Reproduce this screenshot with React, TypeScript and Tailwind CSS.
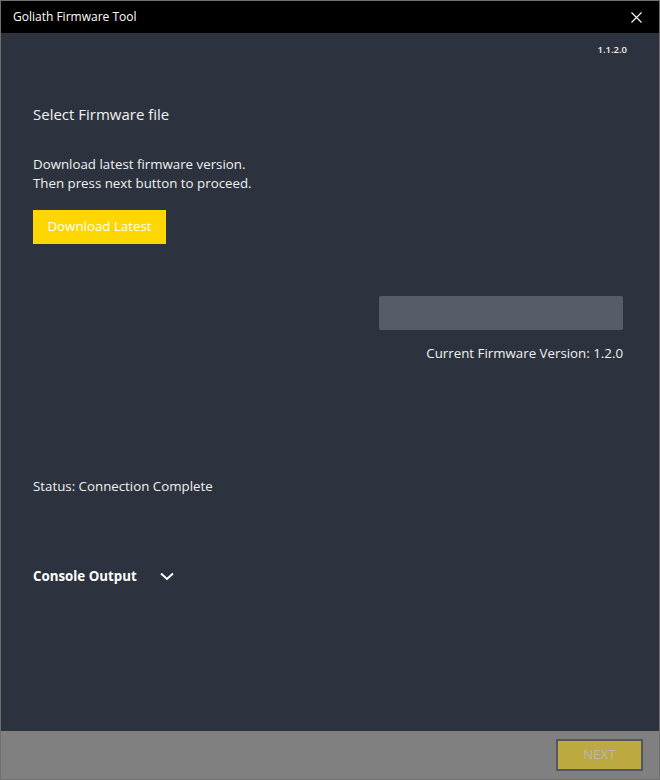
import React from 'react';

const font = { fontFamily: '"Open Sans", "Noto Sans", sans-serif' };

const App: React.FC = () => {
    return (
        <div
            className="w-[660px] h-[780px] flex flex-col border border-[#6f6f6f] bg-[#2d333e] text-white overflow-hidden"
            style={font}
        >
            {/* Title bar */}
            <div className="h-[32px] shrink-0 bg-black flex items-center justify-between pl-[12px] pr-[17px]">
                <span className="text-[12px] text-white">Goliath Firmware Tool</span>
                <svg width="11" height="11" viewBox="0 0 11 11" className="text-white">
                    <path d="M0.5 0.5L10.5 10.5M10.5 0.5L0.5 10.5" stroke="currentColor" strokeWidth="1.1" />
                </svg>
            </div>

            {/* Main content */}
            <div className="flex-1 flex flex-col pl-[32px] pr-[36px]">
                <div className="flex justify-end pt-[10px]">
                    <span className="text-[9.5px] font-semibold text-[#f0f0f0] mr-[-4px]">1.1.2.0</span>
                </div>

                <h1 className="mt-[47px] text-[15px] leading-[20px] text-[#f2f2f2]">Select Firmware file</h1>

                <p className="mt-[31px] text-[13.3px] leading-[19px] text-[#f0f0f0]">
                    Download latest firmware version.
                    <br />
                    Then press next button to proceed.
                </p>

                <button className="mt-[17px] w-[133px] h-[34px] bg-[#ffd700] text-white text-[13.3px] flex items-center justify-center">
                    Download Latest
                </button>

                <div className="flex flex-col items-end mt-[52px]">
                    <div className="w-[244px] h-[34px] rounded-[2px] bg-[#565d68]" />
                    <span className="mt-[14px] text-[13.3px] leading-[19px] text-[#f0f0f0]">
                        Current Firmware Version: 1.2.0
                    </span>
                </div>

                <span className="mt-[114px] text-[13.3px] leading-[19px] text-[#f0f0f0]">Status: Connection Complete</span>

                <div className="mt-[71px] flex items-center gap-[23px]">
                    <span className="text-[13.3px] font-bold leading-[19px]">Console Output</span>
                    <svg width="14" height="9" viewBox="0 0 14 9">
                        <path d="M1 1.5L7 7L13 1.5" fill="none" stroke="white" strokeWidth="2" />
                    </svg>
                </div>
            </div>

            {/* Footer */}
            <div className="h-[48px] shrink-0 bg-[#808080] flex items-center justify-end pr-[16px]">
                <button className="w-[87px] h-[32px] border-2 border-[#55565f] bg-[#bca93f] text-[#b8b8b8] text-[13.3px] flex items-center justify-center">
                    NEXT
                </button>
            </div>
        </div>
    );
};

export default App;
